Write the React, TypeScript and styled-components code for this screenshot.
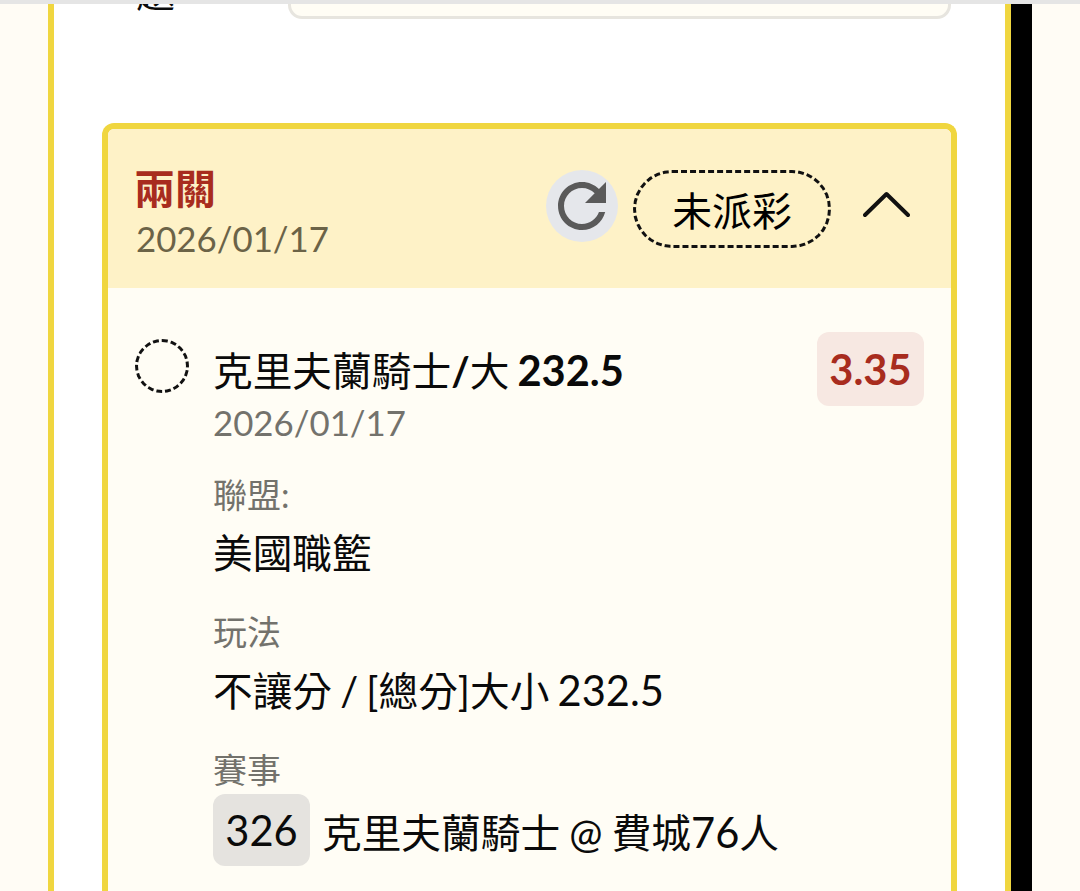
import React from "react";
import styled, { createGlobalStyle } from "styled-components";

const GlobalStyle = createGlobalStyle`
  html, body {
    margin: 0;
    padding: 0;
    background: #fffcf5;
    font-family: Lato, "Noto Sans CJK TC", sans-serif;
    color: #0a0a0a;
  }
`;

const Page = styled.div`
  width: 1080px;
  height: 891px;
  overflow: hidden;
`;

const TopLine = styled.div`
  height: 4px;
  background: #e5e5e5;
`;

const Columns = styled.div`
  display: flex;
  padding-left: 48px;
`;

const Panel = styled.div`
  width: 963px;
  height: 887px;
  box-sizing: border-box;
  background: #fff;
  border-left: 6px solid #f0d63f;
  border-right: 6px solid #f0d63f;
  padding: 0 48px;
`;

const Scrollbar = styled.div`
  width: 21px;
  height: 887px;
  background: #000;
`;

const FormRow = styled.div`
  display: flex;
  height: 15px;
`;

const FormLabel = styled.div`
  width: 186px;
  height: 8px;
  padding-left: 34px;
  box-sizing: border-box;
  overflow: hidden;
  font-size: 39px;
  line-height: 8px;
`;

const LabelGlyph = styled.span`
  display: block;
  margin-top: -31px;
  line-height: 39px;
`;

const FormInput = styled.div`
  flex: 1;
  margin-right: 6px;
  background: #fffdf5;
  border: 3px solid #e7e5df;
  border-top: 0;
  border-radius: 0 0 14px 14px;
`;

const Card = styled.section`
  margin-top: 104px;
  border: 6px solid #f0d63f;
  border-bottom: 0;
  border-radius: 12px 12px 0 0;
  overflow: hidden;
  background: #fffdf5;
`;

const CardHeader = styled.header`
  display: flex;
  align-items: center;
  height: 159px;
  padding: 0 41px 6px 28px;
  box-sizing: border-box;
  background: #fef2c7;
`;

const Heading = styled.div`
  flex: 1;
  margin-top: 16px;
`;

const Title = styled.div`
  font-size: 41px;
  line-height: 50px;
  font-weight: 700;
  color: #a82c1e;
  margin-left: -2px;
`;

const DateText = styled.div<{ $tone: string }>`
  font-size: 34.8px;
  line-height: 50px;
  color: ${(p) => p.$tone};
`;

const RefreshButton = styled.div`
  width: 72px;
  height: 72px;
  border-radius: 50%;
  background: #e5e7eb;
  color: #5a5a5a;
  margin-right: 15px;
`;

const StatusPill = styled.div`
  width: 198px;
  height: 78px;
  box-sizing: border-box;
  margin-top: 6px;
  display: flex;
  align-items: center;
  justify-content: center;
  border: 3px dashed #111;
  border-radius: 39px;
  font-size: 39.8px;
  color: #000;
`;

const ToggleIcon = styled.svg`
  margin-left: 32px;
  margin-top: -4px;
  display: block;
`;

const CardBody = styled.div`
  padding: 44px 27px 80px 27px;
  display: flex;
  gap: 24px;
  align-items: flex-start;
`;

const Radio = styled.div`
  flex: none;
  width: 54px;
  height: 54px;
  box-sizing: border-box;
  margin-top: 7px;
  border: 3px dashed #111;
  border-radius: 50%;
`;

const Content = styled.div`
  flex: 1;
`;

const Selection = styled.div`
  font-size: 39.7px;
  line-height: 52px;
  margin-top: 12px;
  margin-bottom: 1px;
  word-spacing: -2px;
`;

const Strong = styled.b`
  font-weight: 700;
`;

const Num = styled.span`
  font-size: 41.6px;
`;

const Field = styled.div`
  margin-top: 24px;

  & + & {
    margin-top: 26px;
  }
`;

const FieldLabel = styled.div`
  font-size: 34px;
  line-height: 46px;
  color: #73726c;
`;

const FieldValue = styled.div`
  font-size: 39.7px;
  line-height: 60px;
  margin-top: 5px;
  word-spacing: -2px;
`;

const MatchRow = styled.div`
  display: flex;
  align-items: center;
  gap: 12px;
  margin-top: 1px;
  font-size: 39.7px;
  word-spacing: -1px;
`;

const MatchNo = styled.span`
  width: 97px;
  height: 72px;
  display: flex;
  align-items: center;
  justify-content: center;
  border-radius: 12px;
  background: #e5e3df;
  font-size: 41.6px;
`;

const Odds = styled.div`
  flex: none;
  width: 107px;
  height: 74px;
  display: flex;
  align-items: center;
  justify-content: center;
  border-radius: 12px;
  background: #f7e8e2;
  color: #a82c1e;
  font-size: 41.6px;
  font-weight: 700;
`;

export default function App() {
  return (
    <Page>
      <GlobalStyle />
      <TopLine />
      <Columns>
        <Panel>
          <FormRow>
            <FormLabel>
              <LabelGlyph>題</LabelGlyph>
            </FormLabel>
            <FormInput />
          </FormRow>
          <Card>
            <CardHeader>
              <Heading>
                <Title>兩關</Title>
                <DateText $tone="#6b6347">2026/01/17</DateText>
              </Heading>
              <RefreshButton>
                <svg width="72" height="72" viewBox="0 0 24 24" fill="currentColor">
                  <path d="M17.65 6.35C16.2 4.9 14.21 4 12 4c-4.42 0-7.99 3.58-7.99 8s3.57 8 7.99 8c3.73 0 6.84-2.55 7.73-6h-2.08c-.82 2.33-3.04 4-5.65 4-3.31 0-6-2.69-6-6s2.69-6 6-6c1.66 0 3.14.69 4.22 1.78L13 11h7V4l-2.35 2.35z" />
                </svg>
              </RefreshButton>
              <StatusPill>未派彩</StatusPill>
              <ToggleIcon width="47" height="28" viewBox="0 0 47 28" fill="none" stroke="#111" strokeWidth="4" strokeLinecap="round" strokeLinejoin="round">
                <path d="M2 25 23.5 4 45 25" />
              </ToggleIcon>
            </CardHeader>
            <CardBody>
              <Radio />
              <Content>
                <Selection>
                  克里夫蘭騎士<Strong>/</Strong>大 <Strong><Num>232.5</Num></Strong>
                </Selection>
                <DateText $tone="#73726c">2026/01/17</DateText>
                <Field>
                  <FieldLabel>聯盟:</FieldLabel>
                  <FieldValue>美國職籃</FieldValue>
                </Field>
                <Field>
                  <FieldLabel>玩法</FieldLabel>
                  <FieldValue>不讓分 / [總分]大小 <Num>232.5</Num></FieldValue>
                </Field>
                <Field>
                  <FieldLabel>賽事</FieldLabel>
                  <MatchRow>
                    <MatchNo>326</MatchNo>
                    <span>克里夫蘭騎士 @ 費城<Num>76</Num>人</span>
                  </MatchRow>
                </Field>
              </Content>
              <Odds>3.35</Odds>
            </CardBody>
          </Card>
        </Panel>
        <Scrollbar />
      </Columns>
    </Page>
  );
}
